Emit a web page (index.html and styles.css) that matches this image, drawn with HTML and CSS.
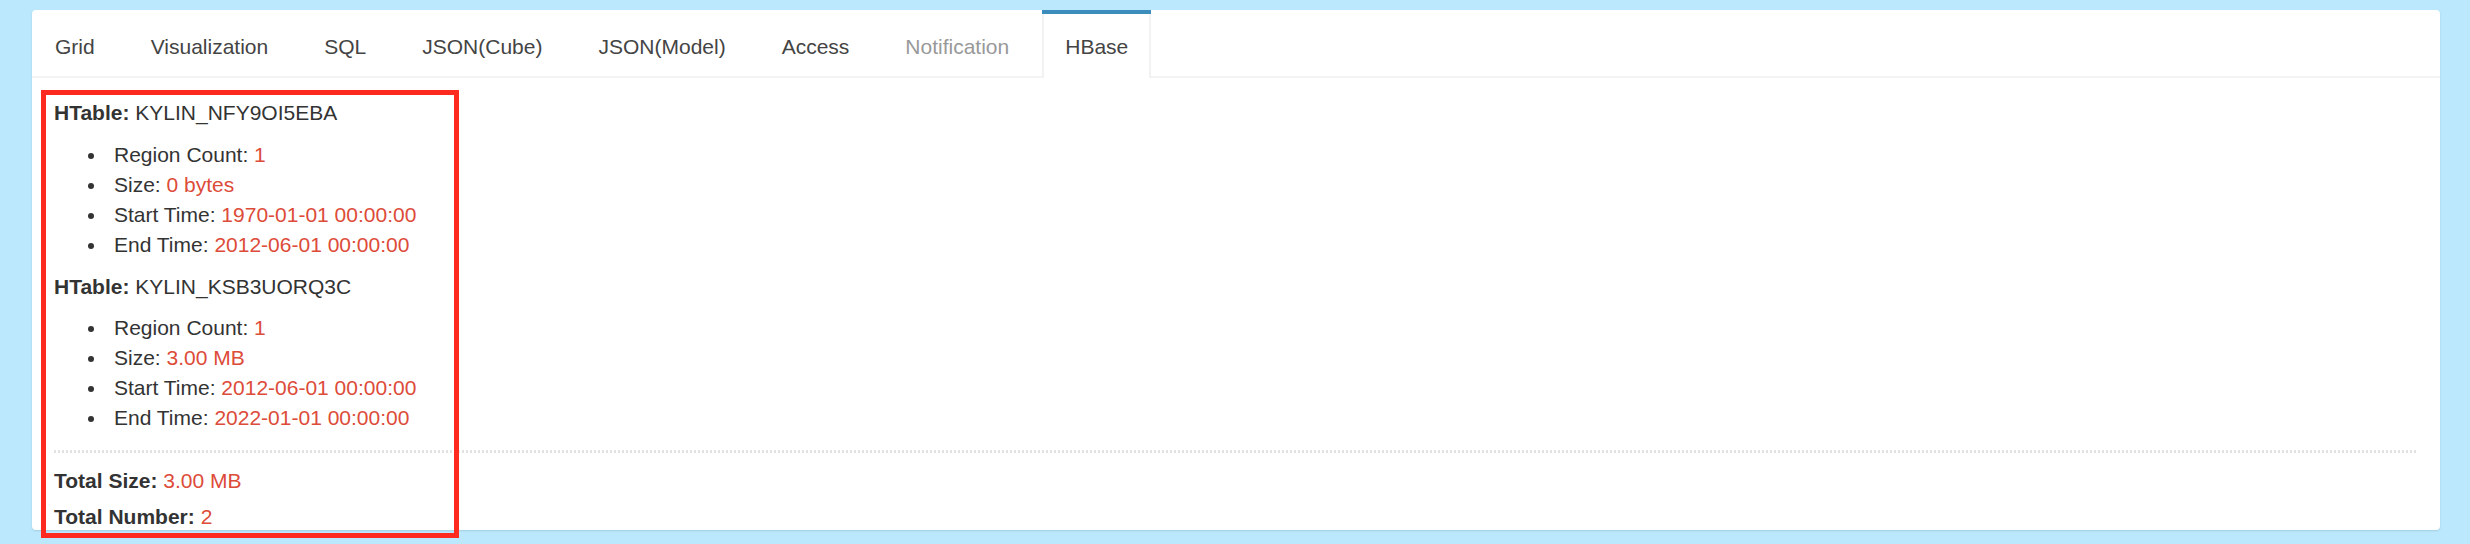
FILE: index.html
```html
<!DOCTYPE html>
<html>
<head>
<meta charset="utf-8">
<link rel="stylesheet" href="styles.css">
</head>
<body>
<div class="card">
  <ul class="tabs">
    <li class="tab"><a>Grid</a></li>
    <li class="tab"><a>Visualization</a></li>
    <li class="tab"><a>SQL</a></li>
    <li class="tab"><a>JSON(Cube)</a></li>
    <li class="tab"><a>JSON(Model)</a></li>
    <li class="tab"><a>Access</a></li>
    <li class="tab disabled"><a>Notification</a></li>
    <li class="tab active"><a>HBase</a></li>
  </ul>
  <div class="pane">
    <div class="htable">
      <p class="title"><b>HTable:</b> KYLIN_NFY9OI5EBA</p>
      <ul class="props">
        <li>Region Count: <span class="val">1</span></li>
        <li>Size: <span class="val">0 bytes</span></li>
        <li>Start Time: <span class="val">1970-01-01 00:00:00</span></li>
        <li>End Time: <span class="val">2012-06-01 00:00:00</span></li>
      </ul>
    </div>
    <div class="htable">
      <p class="title"><b>HTable:</b> KYLIN_KSB3UORQ3C</p>
      <ul class="props">
        <li>Region Count: <span class="val">1</span></li>
        <li>Size: <span class="val">3.00 MB</span></li>
        <li>Start Time: <span class="val">2012-06-01 00:00:00</span></li>
        <li>End Time: <span class="val">2022-01-01 00:00:00</span></li>
      </ul>
    </div>
    <div class="divider"></div>
    <p class="total"><b>Total Size:</b> <span class="val">3.00 MB</span></p>
    <p class="total last"><b>Total Number:</b> <span class="val">2</span></p>
  </div>
</div>
<div class="highlight"></div>
</body>
</html>
```
FILE: styles.css
```css
html, body {
  margin: 0;
  padding: 0;
}
body {
  background: #bbe8fd;
  font-family: "Liberation Sans", Arial, sans-serif;
  font-size: 21px;
  color: #333;
  position: relative;
  height: 544px;
  overflow: hidden;
}
.card {
  margin: 10px 30px 0 32px;
  background: #fff;
  border-radius: 4px;
  box-shadow: 0 1px 2px rgba(0, 0, 0, 0.12);
}
.tabs {
  display: flex;
  list-style: none;
  margin: 0;
  padding: 0;
  border-bottom: 2px solid #f4f4f4;
}
.tab {
  border-top: 4px solid transparent;
  margin-bottom: -2px;
  margin-right: 10px;
}
.tab a {
  display: block;
  padding: 18px 21px 16px;
  line-height: 30px;
  color: #444;
  border-left: 2px solid transparent;
  border-right: 2px solid transparent;
}
.tab.disabled a {
  color: #999;
}
.tab.active {
  border-top-color: #3c8dbc;
}
.tab.active a {
  background: #fff;
  border-left-color: #f2f2f2;
  border-right-color: #f2f2f2;
}
.pane {
  padding: 20px 24px 1px 22px;
}
.pane p {
  margin: 0;
  line-height: 30px;
}
.htable + .htable .title {
  margin-top: 12px;
}
.props {
  margin: 12px 0 0;
  padding-left: 60px;
  line-height: 30px;
  list-style: none;
}
.props li {
  position: relative;
}
.props li::before {
  content: "";
  position: absolute;
  left: -26px;
  top: 13px;
  width: 6px;
  height: 6px;
  border-radius: 50%;
  background: #333;
}
.htable + .htable .props {
  margin-top: 11px;
}
.val {
  color: #dd4b39;
}
.divider {
  margin-top: 17px;
  height: 3px;
  background: repeating-linear-gradient(to right, #e2e2e2 0 2px, transparent 2px 4px);
}
.pane .total {
  margin-top: 13px;
}
.pane .total.last {
  margin-top: 9px;
  line-height: 24px;
}
.highlight {
  position: absolute;
  left: 41px;
  top: 90px;
  width: 408px;
  height: 438px;
  border: 5px solid #fe2a1f;
}
```
